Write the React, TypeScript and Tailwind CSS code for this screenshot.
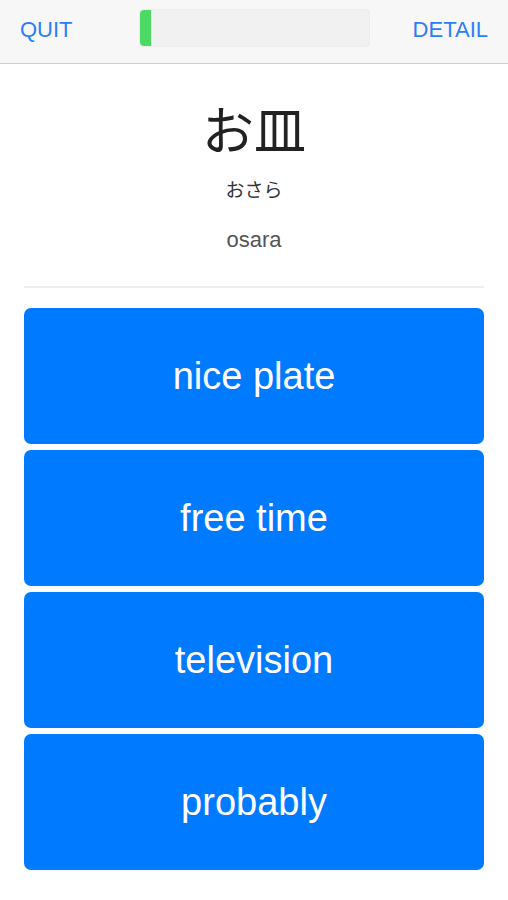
import React from 'react'

const CHOICES = ['nice plate', 'free time', 'television', 'probably']

export default function App() {
  const progress = 5

  return (
    <div className="min-h-screen bg-white font-['Liberation_Sans','Noto_Sans_CJK_JP',sans-serif]">
      {/* Header */}
      <div className="h-16 bg-[#f7f7f7] border-b border-[#cfcfcf] flex items-center px-5">
        <div className="flex-1 flex">
          <button className="text-[22px] text-[#2c7ef5] leading-none mb-[3px]">QUIT</button>
        </div>
        <div className="w-[231px] h-[38px] mb-2 bg-[#f1f1f1] border border-[#ececec] rounded-[4px] overflow-hidden">
          <div
            className="h-full bg-[#4cd964] rounded-l-[4px]"
            style={{ width: `${progress}%` }}
          />
        </div>
        <div className="flex-1 flex justify-end">
          <button className="text-[22px] text-[#2c7ef5] leading-none mb-[3px]">DETAIL</button>
        </div>
      </div>

      {/* Word */}
      <div className="flex flex-col items-center pt-[34px]">
        <div className="text-[52px] leading-[60px] text-[#222] font-['Noto_Sans_CJK_JP',sans-serif]">
          お皿
        </div>
        <div className="mt-[17px] text-[19px] leading-[28px] text-[#333] font-['Noto_Sans_CJK_JP',sans-serif]">
          おさら
        </div>
        <div className="mt-[23px] text-[22px] leading-[28px] text-[#555]">osara</div>
      </div>

      <div className="mx-6 mt-[32px] h-[2px] bg-[#eeeeee]" />

      {/* Choices */}
      <div className="mx-6 mt-5 flex flex-col gap-[6px]">
        {CHOICES.map((c) => (
          <button
            key={c}
            className="h-[136px] w-full rounded-[7px] bg-[#007bff] text-white text-[38px] flex items-center justify-center"
          >
            {c}
          </button>
        ))}
      </div>
    </div>
  )
}
